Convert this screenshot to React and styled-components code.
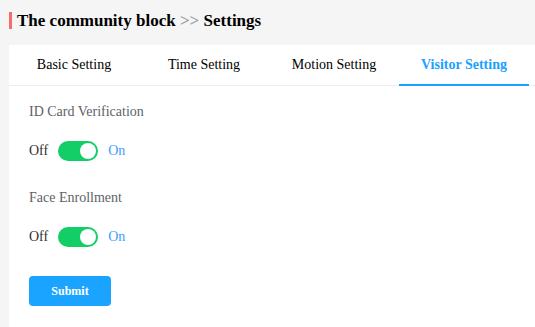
import React, { useState } from "react";
import styled, { createGlobalStyle } from "styled-components";

const GlobalStyle = createGlobalStyle`
  body {
    margin: 0;
    background: #f5f5f5;
    font-family: "Liberation Serif", "Times New Roman", serif;
  }
`

const tabs = ["Basic Setting", "Time Setting", "Motion Setting", "Visitor Setting"];

function Toggle({ on, onChange }) {
    return (
        <SwitchRow>
            <SwitchLabel $active={!on}>Off</SwitchLabel>
            <Track $on={on} onClick={() => onChange(!on)}>
                <Knob $on={on} />
            </Track>
            <SwitchLabel $active={on} $blue>On</SwitchLabel>
        </SwitchRow>
    );
}

function App() {
    const [active, setActive] = useState(3);
    const [idCard, setIdCard] = useState(true);
    const [face, setFace] = useState(true);

    return (
        <>
            <GlobalStyle />
            <Page>
                <Header>
                    The community block <Sep>&gt;&gt;</Sep> Settings
                </Header>
                <Card>
                    <TabBar>
                        {tabs.map((t, i) => (
                            <Tab key={t} $active={i === active} onClick={() => setActive(i)}>{t}</Tab>
                        ))}
                    </TabBar>
                    <Form>
                        <Field>
                            <FieldLabel>ID Card Verification</FieldLabel>
                            <Toggle on={idCard} onChange={setIdCard} />
                        </Field>
                        <Field>
                            <FieldLabel>Face Enrollment</FieldLabel>
                            <Toggle on={face} onChange={setFace} />
                        </Field>
                        <Button>Submit</Button>
                    </Form>
                </Card>
            </Page>
        </>
    );
}

const Page = styled.div`
    padding: 12px 0 0 9px;
`
const Header = styled.h1`
    margin: 0 0 16px 0;
    border-left: 3px solid #f56c6c;
    padding-left: 5px;
    font-size: 17px;
    line-height: 17px;
    font-weight: 700;
    color: #000;
`
const Sep = styled.span`
    color: #a0a0a0;
`
const Card = styled.div`
    background: #fff;
    min-height: calc(100vh - 45px);
`
const TabBar = styled.div`
    display: flex;
    height: 40px;
    border-bottom: 1px solid #eeeeee;
`
const Tab = styled.div`
    width: 130px;
    display: flex;
    align-items: center;
    justify-content: center;
    font-size: 14px;
    font-weight: ${p => p.$active ? 700 : 400};
    color: ${p => p.$active ? "#1aa1ff" : "#000"};
    border-bottom: 2px solid ${p => p.$active ? "#1aa1ff" : "transparent"};
    margin-bottom: -1px;
    cursor: pointer;
`
const Form = styled.div`
    padding: 18px 20px;
    display: flex;
    flex-direction: column;
    align-items: flex-start;
`
const Field = styled.div`
    display: flex;
    flex-direction: column;
    gap: 21px;
    margin-bottom: 29px;
`
const FieldLabel = styled.div`
    font-size: 14px;
    line-height: 16px;
    color: #606266;
`
const SwitchRow = styled.div`
    display: flex;
    align-items: center;
    gap: 10px;
    height: 20px;
`
const SwitchLabel = styled.span`
    font-size: 14px;
    color: ${p => p.$active && p.$blue ? "#409eff" : "#303133"};
`
const Track = styled.div`
    position: relative;
    width: 40px;
    height: 20px;
    border-radius: 10px;
    background: ${p => p.$on ? "#13ce66" : "#dcdfe6"};
    cursor: pointer;
`
const Knob = styled.div`
    position: absolute;
    top: 2px;
    left: ${p => p.$on ? "22px" : "2px"};
    width: 16px;
    height: 16px;
    border-radius: 50%;
    background: #fff;
`
const Button = styled.button`
    width: 82px;
    height: 30px;
    border: none;
    border-radius: 4px;
    background: #1aa3ff;
    color: #fff;
    font-family: inherit;
    font-size: 12px;
    font-weight: 700;
    cursor: pointer;
`

export default App;
